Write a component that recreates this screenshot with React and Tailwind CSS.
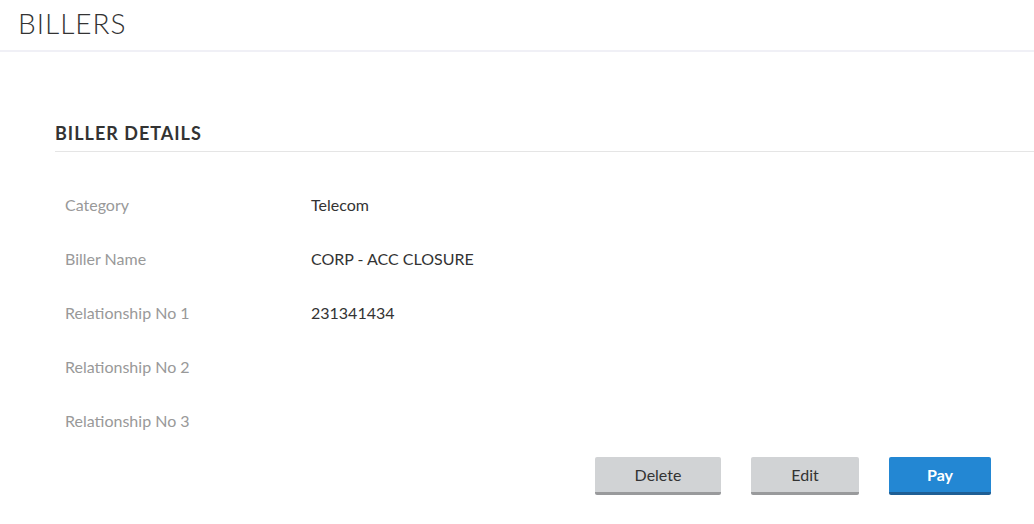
import React from "react";

const details = [
  { label: "Category", value: "Telecom" },
  { label: "Biller Name", value: "CORP - ACC CLOSURE" },
  { label: "Relationship No 1", value: "231341434" },
  { label: "Relationship No 2", value: "" },
  { label: "Relationship No 3", value: "" },
];

export default function App() {
  return (
    <div className="min-h-screen bg-white font-['Lato',sans-serif] text-[#333]">
      <header className="h-[52px] border-b-2 border-[#f0f0f6] pl-[18px] pt-[5px]">
        <h1 className="text-[28px] font-light leading-[36px] tracking-[1px] text-[#333]">
          BILLERS
        </h1>
      </header>

      <section className="pl-[55px] pt-[68px]">
        <h2 className="border-b border-[#e5e5e5] pb-[5px] text-[18px] font-bold leading-[26px] tracking-[1px] text-[#333]">
          BILLER DETAILS
        </h2>

        <div className="pl-[10px] pt-[26px]">
          {details.map((row) => (
            <div key={row.label} className="flex h-[54px] items-center text-[16px]">
              <span className="w-[246px] text-[#999]">{row.label}</span>
              <span className="text-[#333]">{row.value}</span>
            </div>
          ))}
        </div>

        <div className="flex justify-end gap-[30px] pr-[43px] pt-[9px]">
          <button className="h-[38px] w-[126px] rounded-[2px] border-b-[3px] border-[#999a9c] bg-[#d1d3d5] text-[16px] font-normal text-[#333]">
            Delete
          </button>
          <button className="h-[38px] w-[108px] rounded-[2px] border-b-[3px] border-[#999a9c] bg-[#d1d3d5] text-[16px] font-normal text-[#333]">
            Edit
          </button>
          <button className="h-[38px] w-[102px] rounded-[2px] border-b-[3px] border-[#1f5f95] bg-[#2387d3] text-[16px] font-bold text-white">
            Pay
          </button>
        </div>
      </section>
    </div>
  );
}
